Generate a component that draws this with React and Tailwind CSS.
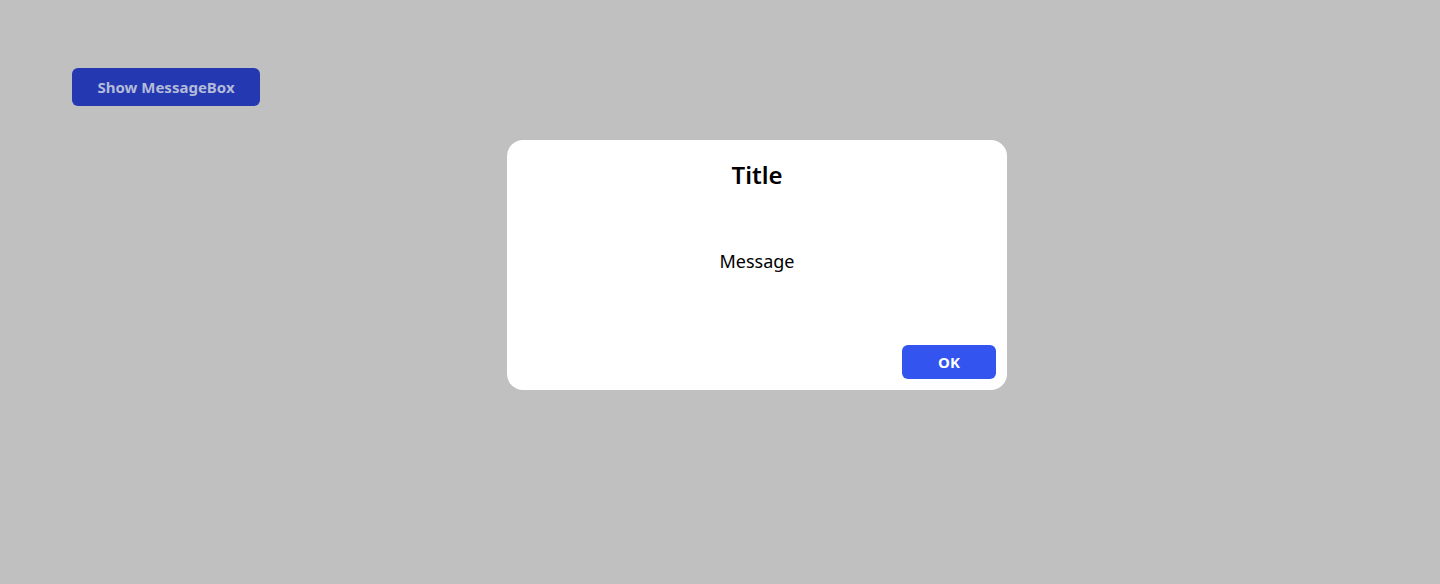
import { useState } from "react";

export default function App() {
  const [open, setOpen] = useState(true);

  return (
    <div
      className="relative min-h-screen h-[584px] bg-[#c0c0c0] px-[72px] pt-[68px]"
      style={{ fontFamily: '"Noto Sans", "Open Sans", sans-serif' }}
    >
      {/* Trigger (dimmed under the overlay) */}
      <button
        onClick={() => setOpen(true)}
        className="w-[188px] h-[38px] rounded-md bg-[#2439b1] text-[15px] font-bold text-[#b3bbd9]"
      >
        Show MessageBox
      </button>

      {/* Message box */}
      {open && (
        <div className="absolute left-[507px] top-[140px] w-[500px] h-[250px] rounded-2xl bg-white flex flex-col">
          <h2 className="mt-[17px] text-center text-[24px] leading-[36px] font-semibold text-black">
            Title
          </h2>
          <p className="flex-1 flex items-center justify-center pb-[16px] text-[18px] text-black">
            Message
          </p>
          <div className="flex justify-end pr-[11px] pb-[11px]">
            <button
              onClick={() => setOpen(false)}
              className="w-[94px] h-[34px] rounded-md bg-[#3354ee] text-[15px] font-bold text-white"
            >
              OK
            </button>
          </div>
        </div>
      )}
    </div>
  );
}
